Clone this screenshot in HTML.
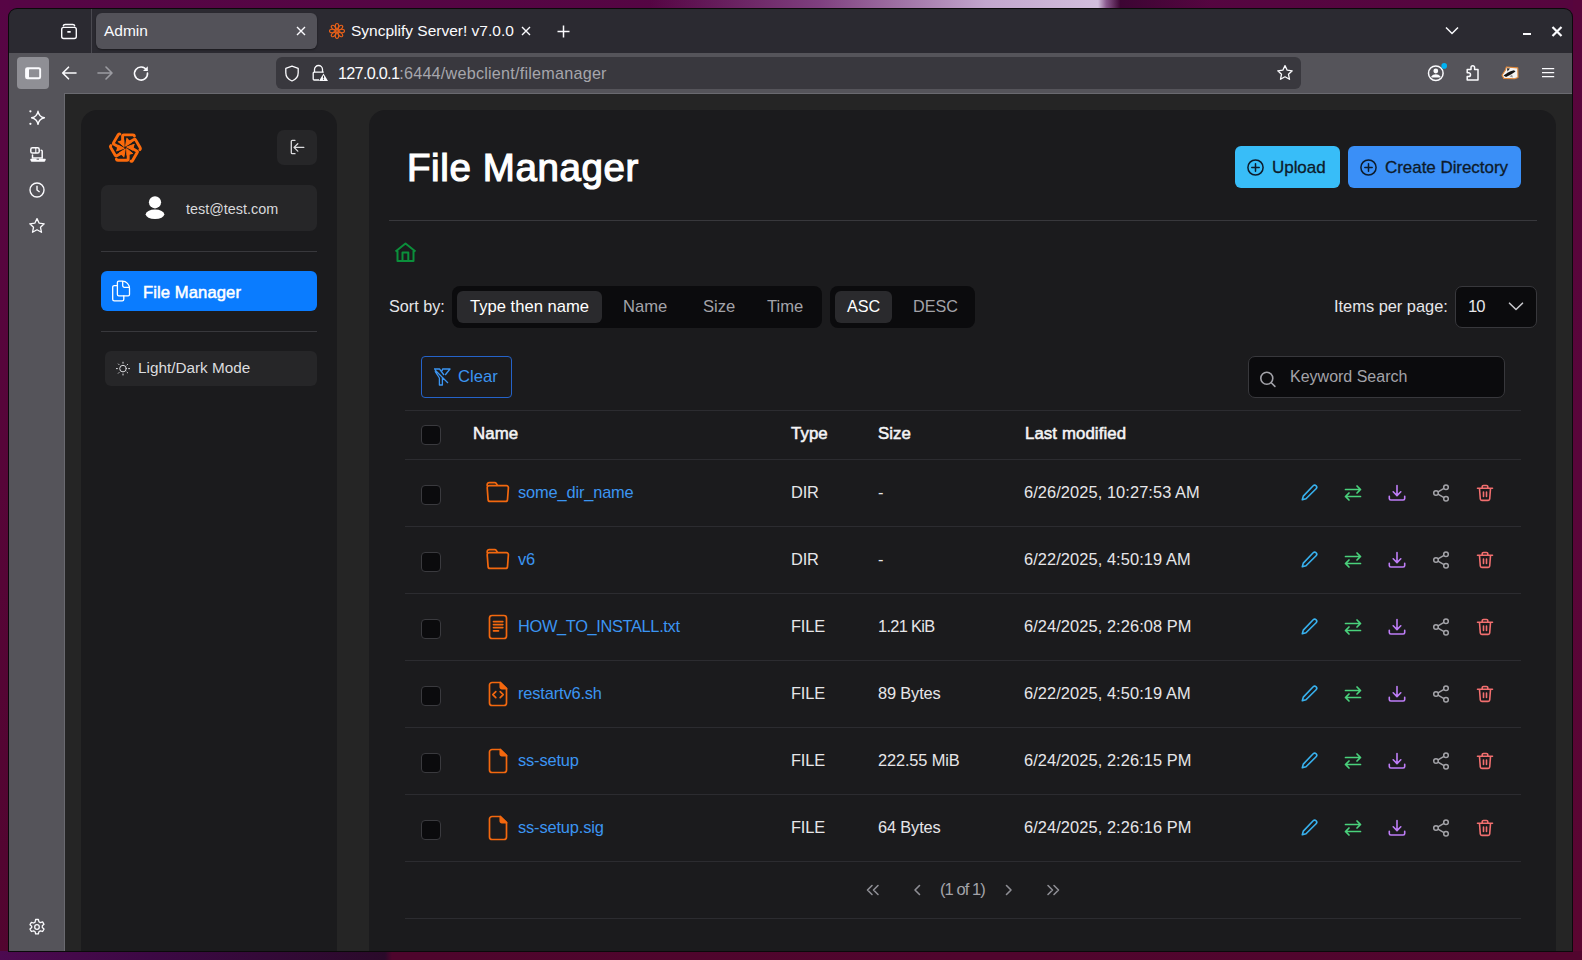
<!DOCTYPE html>
<html><head><meta charset="utf-8">
<style>
*{box-sizing:border-box;margin:0;padding:0}
html,body{width:1582px;height:960px;overflow:hidden}
body{font-family:"Liberation Sans",sans-serif;background:#560842;position:relative}
.a{position:absolute}
.t{white-space:nowrap;line-height:1}
svg{display:block;overflow:visible}
.card{background:#1b1b1d;border-radius:16px 16px 0 0}
.cb{width:20px;height:20px;background:#0b0b0d;border:1px solid #3a3a3e;border-radius:4px}
.rt{font-size:16.4px;color:#e6e6e9;letter-spacing:-0.15px}
</style></head><body>
<div class="a" style="left:0;top:0;width:1582px;height:960px;background:linear-gradient(90deg,#560545 0%,#550543 50%,#56053e 100%)"></div>
<div class="a" style="left:1573px;top:0;width:9px;height:960px;background:linear-gradient(180deg,#58053c 0%,#59053a 50%,#5a0530 100%)"></div>
<div class="a" style="left:0;top:0;width:9px;height:960px;background:linear-gradient(180deg,#570545 0%,#570538 50%,#52052f 100%)"></div>
<div class="a" style="left:650px;top:0;width:560px;height:9px;background:linear-gradient(90deg,rgba(150,100,160,0) 0%,rgba(160,110,175,.55) 30%,rgba(200,175,212,.95) 60%,rgba(210,190,220,1) 80%,rgba(150,110,160,.8) 81.5%,rgba(50,5,45,.7) 84%,rgba(86,5,69,0) 100%)"></div>
<div class="a" style="left:0;top:951px;width:1582px;height:9px;background:linear-gradient(90deg,#4c0a50 0px,#3c0844 150px,#2a0a2a 385px,#4e052c 392px,#52052e 1582px)"></div>
<div class="a" style="left:8px;top:8px;width:1565px;height:944px;background:#0a0a0a;border-radius:9px 9px 0 0"></div>
<div class="a" style="left:9px;top:9px;width:1563px;height:44px;background:#2b2a31;border-radius:8px 8px 0 0"></div>
<div class="a" style="left:9px;top:53px;width:1563px;height:40px;background:#55545a"></div>
<div class="a" style="left:9px;top:93px;width:55px;height:858px;background:#55545a"></div>
<div class="a" style="left:64px;top:93px;width:1508px;height:858px;background:#252525;border-left:1px solid #6a6a70;border-top:1px solid #6a6a70"></div>
<div class="a card" style="left:81px;top:110px;width:256px;height:841px"></div>
<div class="a card" style="left:369px;top:110px;width:1187px;height:841px"></div>
<!-- titlebar icons -->
<svg class="a" style="left:59px;top:22px" width="20" height="18" viewBox="0 0 20 18" fill="none" stroke="#fbfbfe" stroke-width="1.4" stroke-linecap="round"><path d="M4.3 3.9Q4.5 2.5 6.2 2.5H13.8Q15.5 2.5 15.7 3.9"/><rect x="2.7" y="5.4" width="14.6" height="11.1" rx="2"/><path d="M8.9 9.9h2.2" stroke-width="1.6"/></svg>
<div class="a" style="left:91px;top:9px;width:1px;height:44px;background:#4a4950"></div>
<div class="a" style="left:96px;top:13px;width:221px;height:36px;background:#535259;border-radius:6px;box-shadow:0 1px 2px rgba(0,0,0,.4)"></div>
<div class="a t" style="left:104px;top:23px;font-size:15.5px;color:#fbfbfe">Admin</div>
<svg class="a" style="left:295px;top:25px" width="12" height="12" viewBox="0 0 12 12" stroke="#fbfbfe" stroke-width="1.4"><path d="M2 2l8 8M10 2l-8 8"/></svg>
<svg class="a" style="left:329px;top:23px" width="16" height="16" viewBox="0 0 16 16" fill="none" stroke="#e8611a" stroke-width="1.1"><g transform="translate(8 8)"><ellipse cx="0" cy="-4.6" rx="1.75" ry="2.9" transform="rotate(0)"/><ellipse cx="0" cy="-4.6" rx="1.75" ry="2.9" transform="rotate(45)"/><ellipse cx="0" cy="-4.6" rx="1.75" ry="2.9" transform="rotate(90)"/><ellipse cx="0" cy="-4.6" rx="1.75" ry="2.9" transform="rotate(135)"/><ellipse cx="0" cy="-4.6" rx="1.75" ry="2.9" transform="rotate(180)"/><ellipse cx="0" cy="-4.6" rx="1.75" ry="2.9" transform="rotate(225)"/><ellipse cx="0" cy="-4.6" rx="1.75" ry="2.9" transform="rotate(270)"/><ellipse cx="0" cy="-4.6" rx="1.75" ry="2.9" transform="rotate(315)"/><circle r="1.2"/></g></svg>
<div class="a t" style="left:351px;top:23px;font-size:15.5px;color:#fbfbfe">Syncplify Server! v7.0.0</div>
<svg class="a" style="left:520px;top:25px" width="12" height="12" viewBox="0 0 12 12" stroke="#fbfbfe" stroke-width="1.4"><path d="M2 2l8 8M10 2l-8 8"/></svg>
<svg class="a" style="left:556px;top:24px" width="15" height="15" viewBox="0 0 15 15" stroke="#fbfbfe" stroke-width="1.5"><path d="M7.5 1.5v12M1.5 7.5h12"/></svg>
<svg class="a" style="left:1444px;top:25px" width="16" height="11" viewBox="0 0 16 11" fill="none" stroke="#fbfbfe" stroke-width="1.5"><path d="M2 2.5l6 6 6-6"/></svg>
<div class="a" style="left:1523px;top:33px;width:8px;height:2.4px;background:#fbfbfe"></div>
<svg class="a" style="left:1551px;top:26px" width="12" height="11" viewBox="0 0 12 11" stroke="#fbfbfe" stroke-width="2.2"><path d="M1.5 1l9 9M10.5 1l-9 9"/></svg>

<!-- toolbar -->
<div class="a" style="left:17px;top:57px;width:32px;height:32px;background:#8f8f95;border-radius:4px"></div>
<svg class="a" style="left:23px;top:65px" width="20" height="16" viewBox="0 0 20 16"><rect x="2.1" y="2.3" width="16" height="11.9" rx="2.3" fill="#fbfbfe"/><rect x="6" y="4.3" width="10.2" height="7.9" rx="0.4" fill="#8f8f95"/></svg>
<svg class="a" style="left:60px;top:64px" width="18" height="18" viewBox="0 0 18 18" fill="none" stroke="#fbfbfe" stroke-width="1.6" stroke-linecap="round" stroke-linejoin="round"><path d="M16 9H3M8.5 3.2L2.7 9l5.8 5.8"/></svg>
<svg class="a" style="left:96px;top:64px" width="18" height="18" viewBox="0 0 18 18" fill="none" stroke="#9c9ca2" stroke-width="1.6" stroke-linecap="round" stroke-linejoin="round"><path d="M2 9h13.5M10 3l6 6-6 6"/></svg>
<svg class="a" style="left:132px;top:64px" width="18" height="18" viewBox="0 0 18 18" fill="none" stroke="#fbfbfe" stroke-width="1.6" stroke-linecap="round"><path d="M14.6 6.2A6.5 6.5 0 1 0 15.5 9"/><path d="M15.8 2.2v4.8h-4.8z" fill="#fbfbfe" stroke="none"/></svg>
<div class="a" style="left:276px;top:57px;width:1025px;height:32px;background:#39383e;border-radius:6px"></div>
<svg class="a" style="left:284px;top:65px" width="16" height="17" viewBox="0 0 16 17" fill="none" stroke="#fbfbfe" stroke-width="1.3" stroke-linejoin="round"><path d="M8 1.2L1.8 3.4v4.4c0 4 2.7 6.9 6.2 8.2 3.5-1.3 6.2-4.2 6.2-8.2V3.4z"/></svg>
<svg class="a" style="left:311px;top:64px" width="18" height="18" viewBox="0 0 18 18" fill="none" stroke="#fbfbfe" stroke-width="1.3"><path d="M3.5 8.2V5.5a4 4 0 0 1 8 0v2.7"/><path d="M8 16H3.2a1 1 0 0 1-1-1V9.2a1 1 0 0 1 1-1h9.5"/><path d="M12.5 9.5l4.5 7.5h-9z" fill="#fbfbfe" stroke="none"/><path d="M12.5 11.8v2.6M12.5 15.3v.8" stroke="#39383e" stroke-width="1.1"/></svg>
<div class="a t" style="left:338px;top:65px;font-size:16.2px;color:#fbfbfe"><span style="letter-spacing:-0.7px">127.0.0.1</span><span style="color:#a6a6ac;letter-spacing:0.22px">:6444/webclient/filemanager</span></div>
<svg class="a" style="left:1276px;top:64px" width="18" height="18" viewBox="0 0 18 18" fill="none" stroke="#fbfbfe" stroke-width="1.3" stroke-linejoin="round"><path d="M9 1.6l2.2 4.6 5 .6-3.7 3.5 1 5-4.5-2.5-4.5 2.5 1-5L1.8 6.8l5-.6z"/></svg>
<svg class="a" style="left:1426px;top:63px" width="22" height="20" viewBox="0 0 22 20" fill="none"><circle cx="9.8" cy="10.2" r="7.3" stroke="#fbfbfe" stroke-width="1.5"/><circle cx="9.8" cy="8" r="2.4" fill="#fbfbfe"/><path d="M5.5 13.2c.8-1.3 2.3-2 4.3-2s3.5.7 4.3 2v1.3H5.5z" fill="#fbfbfe"/><circle cx="18.2" cy="2.9" r="2.8" fill="#00b3f4"/></svg>
<svg class="a" style="left:1464px;top:65px" width="18" height="18" viewBox="0 0 18 18" fill="none" stroke="#fbfbfe" stroke-width="1.5" stroke-linejoin="round"><path d="M7 2.5a1.8 1.8 0 0 1 3.6 0V4.5h3.4v10.5H3.2v-3.4h1.4a1.9 1.9 0 0 0 0-3.8H3.2V4.5H7z"/></svg>
<svg class="a" style="left:1500px;top:64px" width="20" height="17" viewBox="0 0 20 17"><path d="M6.4 3L17.8 3.9 18 13.6 14.5 14.7 3.9 14.4 2 11.2 5.3 6.3z" fill="#f4f4f4" stroke="#e0883a" stroke-width="1.1" stroke-linejoin="round"/><path d="M3.5 11.5L8 8.5 10.5 7.2 14 6.2 15.5 7.5 12.5 9.5 10 11 6 13z" fill="#151515"/><path d="M7 4.2l3 .2-2.5 3z" fill="#222"/><path d="M9.5 12.5l2.5-2 1 3z" fill="#9a9a9a"/></svg>
<svg class="a" style="left:1540px;top:64px" width="16" height="16" viewBox="0 0 16 16" stroke="#fbfbfe" stroke-width="1.4"><path d="M2 4.6h12.2M2 8.6h12.2M2 12.6h12.2"/></svg>

<!-- firefox sidebar icons -->
<svg class="a" style="left:28px;top:108px" width="20" height="20" viewBox="0 0 20 20" fill="none" stroke="#fbfbfe" stroke-width="1.4" stroke-linejoin="round"><path d="M10 3.3C10.7 7.3 12.3 8.9 16.4 9.8 12.3 10.7 10.7 12.3 10 16.3 9.3 12.3 7.7 10.7 3.6 9.8 7.7 8.9 9.3 7.3 10 3.3z"/><circle cx="2.4" cy="3.3" r="1.1" fill="#fbfbfe" stroke="none"/><circle cx="2.4" cy="15.8" r="1.1" fill="#fbfbfe" stroke="none"/></svg>
<svg class="a" style="left:24px;top:140px" width="28" height="28" viewBox="0 0 28 28" fill="none" stroke="#fbfbfe" stroke-width="1.5"><rect x="6.8" y="7.8" width="8.4" height="5.2" rx="1.6"/><path d="M11.8 8v5" stroke-width="1.1"/><path d="M17.2 10.2a1 1 0 0 1 1 1v6.8H8.5V15" stroke-linecap="round"/><path d="M7 18.7h14a.8.8 0 0 1 .7 1.1l-.4 1a1.2 1.2 0 0 1-1.1.9H7.8a1.2 1.2 0 0 1-1.1-.9l-.4-1a.8.8 0 0 1 .7-1.1z" fill="#fbfbfe" stroke="none"/><path d="M12.6 19.2h2.4" stroke="#55545a" stroke-width="1"/></svg>
<svg class="a" style="left:28px;top:181px" width="18" height="18" viewBox="0 0 18 18" fill="none" stroke="#fbfbfe" stroke-width="1.4"><circle cx="9" cy="9" r="7"/><path d="M9 4.8V9l2.6 2"/></svg>
<svg class="a" style="left:28px;top:217px" width="18" height="18" viewBox="0 0 18 18" fill="none" stroke="#fbfbfe" stroke-width="1.3" stroke-linejoin="round"><path d="M9 1.6l2.2 4.6 5 .6-3.7 3.5 1 5-4.5-2.5-4.5 2.5 1-5L1.8 6.8l5-.6z"/></svg>
<svg class="a" style="left:28px;top:918px" width="18" height="18" viewBox="0 0 18 18" fill="none" stroke="#fbfbfe" stroke-width="1.3"><path d="M7.6 1.5h2.8l.5 2.2 1.5.9 2.2-.7 1.4 2.4-1.7 1.5v1.8l1.7 1.5-1.4 2.4-2.2-.7-1.5.9-.5 2.2H7.6l-.5-2.2-1.5-.9-2.2.7-1.4-2.4 1.7-1.5V8.2L2 6.7l1.4-2.4 2.2.7 1.5-.9z" stroke-linejoin="round"/><circle cx="9" cy="9" r="2.3"/></svg>

<!-- app sidebar -->
<svg class="a" style="left:107px;top:130px" width="36" height="36" viewBox="-18.4 -17.6 36 36"><g fill="#fb6a0c" stroke="#fb6a0c" stroke-linejoin="round">
<g><path d="M9 -11.6 Q8.8 -12.7 7.6 -12.7 L-1.6 -12.7 Q-2.8 -12.7 -2.8 -11.5 L-2.8 -4.5" fill="none" stroke-width="2.9" stroke-linecap="round"/><path d="M-7.6 -6.2 L-1.2 -0.9 L-1.6 -8" stroke-width="1"/></g><g transform="rotate(60)"><path d="M9 -11.6 Q8.8 -12.7 7.6 -12.7 L-1.6 -12.7 Q-2.8 -12.7 -2.8 -11.5 L-2.8 -4.5" fill="none" stroke-width="2.9" stroke-linecap="round"/><path d="M-7.6 -6.2 L-1.2 -0.9 L-1.6 -8" stroke-width="1"/></g><g transform="rotate(120)"><path d="M9 -11.6 Q8.8 -12.7 7.6 -12.7 L-1.6 -12.7 Q-2.8 -12.7 -2.8 -11.5 L-2.8 -4.5" fill="none" stroke-width="2.9" stroke-linecap="round"/><path d="M-7.6 -6.2 L-1.2 -0.9 L-1.6 -8" stroke-width="1"/></g><g transform="rotate(180)"><path d="M9 -11.6 Q8.8 -12.7 7.6 -12.7 L-1.6 -12.7 Q-2.8 -12.7 -2.8 -11.5 L-2.8 -4.5" fill="none" stroke-width="2.9" stroke-linecap="round"/><path d="M-7.6 -6.2 L-1.2 -0.9 L-1.6 -8" stroke-width="1"/></g><g transform="rotate(240)"><path d="M9 -11.6 Q8.8 -12.7 7.6 -12.7 L-1.6 -12.7 Q-2.8 -12.7 -2.8 -11.5 L-2.8 -4.5" fill="none" stroke-width="2.9" stroke-linecap="round"/><path d="M-7.6 -6.2 L-1.2 -0.9 L-1.6 -8" stroke-width="1"/></g><g transform="rotate(300)"><path d="M9 -11.6 Q8.8 -12.7 7.6 -12.7 L-1.6 -12.7 Q-2.8 -12.7 -2.8 -11.5 L-2.8 -4.5" fill="none" stroke-width="2.9" stroke-linecap="round"/><path d="M-7.6 -6.2 L-1.2 -0.9 L-1.6 -8" stroke-width="1"/></g></g></svg>
<div class="a" style="left:277px;top:130px;width:40px;height:35px;background:#262628;border-radius:7px"></div>
<svg class="a" style="left:288px;top:138px" width="18" height="18" viewBox="0 0 18 18" fill="none" stroke="#dcdcdf" stroke-width="1.3" stroke-linecap="round" stroke-linejoin="round"><path d="M7 2.3H4.3a1 1 0 0 0-1 1v11.4a1 1 0 0 0 1 1H7"/><path d="M15.8 9.4H6.3M9.8 5.7L6 9.4l3.8 3.7"/></svg>
<div class="a" style="left:101px;top:185px;width:216px;height:46px;background:#262628;border-radius:7px"></div>
<svg class="a" style="left:145px;top:196px" width="20" height="24" viewBox="0 0 20 24" fill="#fff"><circle cx="10" cy="6.3" r="6.1"/><ellipse cx="10" cy="18.3" rx="9.3" ry="4.8"/></svg>
<div class="a t" style="left:186px;top:202px;font-size:14.4px;color:#d9d9dc">test@test.com</div>
<div class="a" style="left:101px;top:251px;width:216px;height:1px;background:#38383c"></div>
<div class="a" style="left:101px;top:271px;width:216px;height:40px;background:#0a7cff;border-radius:6px"></div>
<svg class="a" style="left:105px;top:275px" width="32" height="32" viewBox="0 0 32 32" fill="none" stroke="#fff" stroke-width="1.3" stroke-linejoin="round" stroke-linecap="round"><path d="M12.4 10.6H9.3a1.6 1.6 0 0 0-1.6 1.6v12a1.6 1.6 0 0 0 1.6 1.6h7.9a1.6 1.6 0 0 0 1.6-1.6v-3.4"/><path d="M12.4 7.6a1.4 1.4 0 0 1 1.4-1.4h3.4c4.3 0 7.3 3.3 7.3 7.4v5.9a1.3 1.3 0 0 1-1.3 1.3h-9.4a1.4 1.4 0 0 1-1.4-1.4z"/><path d="M17.7 6.5v4.2a1.6 1.6 0 0 0 1.6 1.6h4.5"/></svg>
<div class="a t" style="left:143px;top:284.5px;font-size:16.6px;font-weight:400;letter-spacing:0.1px;-webkit-text-stroke:0.5px #fff;color:#fff">File Manager</div>
<div class="a" style="left:101px;top:331px;width:216px;height:1px;background:#38383c"></div>
<div class="a" style="left:105px;top:351px;width:212px;height:35px;background:#262628;border-radius:6px"></div>
<svg class="a" style="left:115px;top:361px" width="16" height="16" viewBox="0 0 16 16" fill="none" stroke="#dcdcdf" stroke-width="1" stroke-linecap="round"><circle cx="8" cy="7.6" r="3.3"/><path d="M8 1.2v1M8 13v1M1.4 7.6h1M13.6 7.6h1M3.4 3l.6.6M12 11.2l.6.6M3.4 12.2l.6-.6M12 4l.6-.6"/></svg>
<div class="a t" style="left:138px;top:360px;font-size:15.3px;color:#dcdcdf">Light/Dark Mode</div>

<!-- main header -->
<div class="a t" style="left:407px;top:149.3px;font-size:38.5px;font-weight:400;color:#fff;letter-spacing:0.6px;-webkit-text-stroke:1.2px #fff">File Manager</div>
<div class="a" style="left:1235px;top:146px;width:105px;height:42px;background:#38bdf8;border-radius:6px"></div>
<svg class="a" style="left:1246px;top:158px" width="19" height="19" viewBox="0 0 19 19" fill="none" stroke="#0d1b2b" stroke-width="1.5" stroke-linecap="round"><circle cx="9.5" cy="9.5" r="7.6"/><path d="M9.5 5.8v7.4M5.8 9.5h7.4"/></svg>
<div class="a t" style="left:1272px;top:159px;font-size:17px;color:#0d1b2b;letter-spacing:-0.05px;-webkit-text-stroke:0.3px #0d1b2b">Upload</div>
<div class="a" style="left:1348px;top:146px;width:173px;height:42px;background:#3a8ff7;border-radius:6px"></div>
<svg class="a" style="left:1359px;top:158px" width="19" height="19" viewBox="0 0 19 19" fill="none" stroke="#0d1b2b" stroke-width="1.5" stroke-linecap="round"><circle cx="9.5" cy="9.5" r="7.6"/><path d="M9.5 5.8v7.4M5.8 9.5h7.4"/></svg>
<div class="a t" style="left:1385px;top:159px;font-size:17px;color:#0d1b2b;letter-spacing:-0.05px;-webkit-text-stroke:0.3px #0d1b2b">Create Directory</div>
<div class="a" style="left:389px;top:220px;width:1148px;height:1px;background:#38383c"></div>
<svg class="a" style="left:393px;top:241px" width="24" height="22" viewBox="0 0 24 22" fill="none" stroke="#0b8f3b" stroke-width="2" stroke-linejoin="round"><path d="M2.5 10.5L12.5 2.5l10 8M4.5 9v11h16V9M9.5 20v-8.5h5.8V20"/></svg>

<div class="a t" style="left:389px;top:298px;font-size:16.2px;color:#e6e6e9">Sort by:</div>
<div class="a" style="left:452px;top:286px;width:370px;height:42px;background:#0b0b0d;border-radius:8px"></div>
<div class="a" style="left:457px;top:291px;width:145px;height:32px;background:#2a2a2d;border-radius:6px"></div>
<div class="a t" style="left:470px;top:298.5px;font-size:16.6px;color:#fff">Type then name</div>
<div class="a t" style="left:623px;top:298.5px;font-size:16.6px;color:#a3a3a9">Name</div>
<div class="a t" style="left:703px;top:298.5px;font-size:16.6px;color:#a3a3a9">Size</div>
<div class="a t" style="left:767px;top:298.5px;font-size:16.6px;color:#a3a3a9">Time</div>
<div class="a" style="left:830px;top:286px;width:145px;height:42px;background:#0b0b0d;border-radius:8px"></div>
<div class="a" style="left:835px;top:291px;width:57px;height:32px;background:#2a2a2d;border-radius:6px"></div>
<div class="a t" style="left:847px;top:298px;font-size:16.2px;color:#fff">ASC</div>
<div class="a t" style="left:913px;top:298px;font-size:16.2px;color:#a3a3a9">DESC</div>
<div class="a t" style="left:1334px;top:298px;font-size:16.4px;color:#e6e6e9">Items per page:</div>
<div class="a" style="left:1455px;top:286px;width:82px;height:42px;background:#0b0b0d;border:1px solid #38383c;border-radius:7px"></div>
<div class="a t" style="left:1468px;top:299px;font-size:16.6px;color:#e6e6e9;letter-spacing:-1px">10</div>
<svg class="a" style="left:1507px;top:299px" width="18" height="14" viewBox="0 0 18 14" fill="none" stroke="#c8c8cc" stroke-width="1.6" stroke-linecap="round" stroke-linejoin="round"><path d="M2.5 4.2l6.5 6.3 6.5-6.3"/></svg>

<div class="a" style="left:421px;top:356px;width:91px;height:42px;border:1px solid #2563c9;border-radius:4px"></div>
<svg class="a" style="left:432px;top:367px" width="20" height="20" viewBox="0 0 20 20" fill="none" stroke="#3b95f2" stroke-width="1.3" stroke-linejoin="round"><path d="M2 2h5.5L12 8M10 4l.6-2H18l-4.8 6M3 3l13 13M10.4 10.2v7.8h-3V11L3 4.2"/></svg>
<div class="a t" style="left:458px;top:369px;font-size:16.6px;color:#3b95f2">Clear</div>
<div class="a" style="left:1248px;top:356px;width:257px;height:42px;background:#0b0b0d;border:1px solid #38383c;border-radius:7px"></div>
<svg class="a" style="left:1258px;top:369px" width="20" height="20" viewBox="0 0 20 20" fill="none" stroke="#a3a3a9" stroke-width="1.6" stroke-linecap="round"><circle cx="8.8" cy="9.3" r="6"/><path d="M13.3 13.8l3.6 3.6"/></svg>
<div class="a t" style="left:1290px;top:368.5px;font-size:16px;color:#a3a3a9">Keyword Search</div>

<!-- table -->
<div class="a" style="left:405px;top:410px;width:1116px;height:1px;background:#2c2c30"></div>
<div class="a cb" style="left:421px;top:425px"></div>
<div class="a t" style="left:473px;top:426.1px;font-size:16.8px;font-weight:400;letter-spacing:0.1px;-webkit-text-stroke:0.55px #f4f4f5;color:#f4f4f5">Name</div>
<div class="a t" style="left:791px;top:426.1px;font-size:16.8px;font-weight:400;letter-spacing:0.1px;-webkit-text-stroke:0.55px #f4f4f5;color:#f4f4f5">Type</div>
<div class="a t" style="left:878px;top:426.1px;font-size:16.8px;font-weight:400;letter-spacing:0.1px;-webkit-text-stroke:0.55px #f4f4f5;color:#f4f4f5">Size</div>
<div class="a t" style="left:1025px;top:426.1px;font-size:16.8px;font-weight:400;letter-spacing:0.1px;-webkit-text-stroke:0.55px #f4f4f5;color:#f4f4f5">Last modified</div>
<div class="a" style="left:405px;top:459px;width:1116px;height:1px;background:#2c2c30"></div>

<div class="a" style="left:405px;top:526px;width:1116px;height:1px;background:#2c2c30"></div>
<div class="a cb" style="left:421px;top:485px"></div>
<svg class="a" style="left:485px;top:481px" width="26" height="22" viewBox="0 0 26 22" fill="none" stroke="#f3680f" stroke-width="1.7" stroke-linejoin="round"><path d="M2.2 5.2V3.6a2 2 0 0 1 2-2h5.6a1.6 1.6 0 0 1 1.3.7l1.4 2.1"/><path d="M4.2 4.6h17.2a2 2 0 0 1 2 2.1l-.9 11.9a1.9 1.9 0 0 1-1.9 1.8H5a1.9 1.9 0 0 1-1.9-1.8L2.2 6.7a2 2 0 0 1 2-2.1z"/></svg>
<div class="a t rt" style="left:518px;top:484px;color:#3b95f2;">some_dir_name</div>
<div class="a t rt" style="left:791px;top:484px">DIR</div>
<div class="a t rt" style="left:878px;top:484px;">-</div>
<div class="a t rt" style="left:1024px;top:484px;letter-spacing:0.08px">6/26/2025, 10:27:53 AM</div>
<svg class="a" style="left:1299px;top:483px" width="20" height="20" viewBox="0 0 20 20" fill="none" stroke="#38b2ef" stroke-width="1.6" stroke-linejoin="round"><path d="M14.2 2.8a2 2 0 0 1 2.9 2.9L7 15.8l-3.7 1 1-3.7z"/></svg>
<svg class="a" style="left:1343px;top:483px" width="20" height="20" viewBox="0 0 20 20" fill="none" stroke="#4ad27c" stroke-width="1.7" stroke-linecap="round" stroke-linejoin="round"><path d="M2.5 6.5h15M14 3l3.5 3.5L14 10M17.5 13.5h-15M6 10l-3.5 3.5L6 17"/></svg>
<svg class="a" style="left:1387px;top:483px" width="20" height="20" viewBox="0 0 20 20" fill="none" stroke="#bf7ef8" stroke-width="1.6" stroke-linecap="round" stroke-linejoin="round"><path d="M10 2.5v10M6.2 8.8L10 12.6l3.8-3.8M2.3 13.2v2.3a1.5 1.5 0 0 0 1.5 1.5h12.4a1.5 1.5 0 0 0 1.5-1.5v-2.3"/></svg>
<svg class="a" style="left:1431px;top:483px" width="20" height="20" viewBox="0 0 20 20" fill="none" stroke="#a3a3a8" stroke-width="1.5"><circle cx="5" cy="10" r="2.3"/><circle cx="15" cy="4.3" r="2.3"/><circle cx="15" cy="15.7" r="2.3"/><path d="M7 8.9l6-3.5M7 11.1l6 3.5"/></svg>
<svg class="a" style="left:1475px;top:483px" width="20" height="20" viewBox="0 0 20 20" fill="none" stroke="#f26f6f" stroke-width="1.6" stroke-linecap="round" stroke-linejoin="round"><path d="M2.5 5.2h15M7.2 5V3.8a1.3 1.3 0 0 1 1.3-1.3h3a1.3 1.3 0 0 1 1.3 1.3V5M4.5 5.5l.8 10.5a1.5 1.5 0 0 0 1.5 1.4h6.4a1.5 1.5 0 0 0 1.5-1.4l.8-10.5M8.5 9v4.5M11.5 9v4.5"/></svg>
<div class="a" style="left:405px;top:593px;width:1116px;height:1px;background:#2c2c30"></div>
<div class="a cb" style="left:421px;top:552px"></div>
<svg class="a" style="left:485px;top:548px" width="26" height="22" viewBox="0 0 26 22" fill="none" stroke="#f3680f" stroke-width="1.7" stroke-linejoin="round"><path d="M2.2 5.2V3.6a2 2 0 0 1 2-2h5.6a1.6 1.6 0 0 1 1.3.7l1.4 2.1"/><path d="M4.2 4.6h17.2a2 2 0 0 1 2 2.1l-.9 11.9a1.9 1.9 0 0 1-1.9 1.8H5a1.9 1.9 0 0 1-1.9-1.8L2.2 6.7a2 2 0 0 1 2-2.1z"/></svg>
<div class="a t rt" style="left:518px;top:551px;color:#3b95f2;">v6</div>
<div class="a t rt" style="left:791px;top:551px">DIR</div>
<div class="a t rt" style="left:878px;top:551px;">-</div>
<div class="a t rt" style="left:1024px;top:551px;letter-spacing:0.08px">6/22/2025, 4:50:19 AM</div>
<svg class="a" style="left:1299px;top:550px" width="20" height="20" viewBox="0 0 20 20" fill="none" stroke="#38b2ef" stroke-width="1.6" stroke-linejoin="round"><path d="M14.2 2.8a2 2 0 0 1 2.9 2.9L7 15.8l-3.7 1 1-3.7z"/></svg>
<svg class="a" style="left:1343px;top:550px" width="20" height="20" viewBox="0 0 20 20" fill="none" stroke="#4ad27c" stroke-width="1.7" stroke-linecap="round" stroke-linejoin="round"><path d="M2.5 6.5h15M14 3l3.5 3.5L14 10M17.5 13.5h-15M6 10l-3.5 3.5L6 17"/></svg>
<svg class="a" style="left:1387px;top:550px" width="20" height="20" viewBox="0 0 20 20" fill="none" stroke="#bf7ef8" stroke-width="1.6" stroke-linecap="round" stroke-linejoin="round"><path d="M10 2.5v10M6.2 8.8L10 12.6l3.8-3.8M2.3 13.2v2.3a1.5 1.5 0 0 0 1.5 1.5h12.4a1.5 1.5 0 0 0 1.5-1.5v-2.3"/></svg>
<svg class="a" style="left:1431px;top:550px" width="20" height="20" viewBox="0 0 20 20" fill="none" stroke="#a3a3a8" stroke-width="1.5"><circle cx="5" cy="10" r="2.3"/><circle cx="15" cy="4.3" r="2.3"/><circle cx="15" cy="15.7" r="2.3"/><path d="M7 8.9l6-3.5M7 11.1l6 3.5"/></svg>
<svg class="a" style="left:1475px;top:550px" width="20" height="20" viewBox="0 0 20 20" fill="none" stroke="#f26f6f" stroke-width="1.6" stroke-linecap="round" stroke-linejoin="round"><path d="M2.5 5.2h15M7.2 5V3.8a1.3 1.3 0 0 1 1.3-1.3h3a1.3 1.3 0 0 1 1.3 1.3V5M4.5 5.5l.8 10.5a1.5 1.5 0 0 0 1.5 1.4h6.4a1.5 1.5 0 0 0 1.5-1.4l.8-10.5M8.5 9v4.5M11.5 9v4.5"/></svg>
<div class="a" style="left:405px;top:660px;width:1116px;height:1px;background:#2c2c30"></div>
<div class="a cb" style="left:421px;top:619px"></div>
<svg class="a" style="left:488px;top:614px" width="20" height="26" viewBox="0 0 20 26" fill="none" stroke="#f3680f" stroke-width="1.7" stroke-linecap="round"><rect x="1.5" y="1.5" width="17" height="23" rx="2.6"/><path d="M5.5 7.6h9.3M5.5 10.6h9.3M5.5 13.6h9.3M5.5 16.8h5"/></svg>
<div class="a t rt" style="left:518px;top:618px;color:#3b95f2;letter-spacing:-0.35px;">HOW_TO_INSTALL.txt</div>
<div class="a t rt" style="left:791px;top:618px">FILE</div>
<div class="a t rt" style="left:878px;top:618px;letter-spacing:-0.7px;">1.21 KiB</div>
<div class="a t rt" style="left:1024px;top:618px;letter-spacing:0.08px">6/24/2025, 2:26:08 PM</div>
<svg class="a" style="left:1299px;top:617px" width="20" height="20" viewBox="0 0 20 20" fill="none" stroke="#38b2ef" stroke-width="1.6" stroke-linejoin="round"><path d="M14.2 2.8a2 2 0 0 1 2.9 2.9L7 15.8l-3.7 1 1-3.7z"/></svg>
<svg class="a" style="left:1343px;top:617px" width="20" height="20" viewBox="0 0 20 20" fill="none" stroke="#4ad27c" stroke-width="1.7" stroke-linecap="round" stroke-linejoin="round"><path d="M2.5 6.5h15M14 3l3.5 3.5L14 10M17.5 13.5h-15M6 10l-3.5 3.5L6 17"/></svg>
<svg class="a" style="left:1387px;top:617px" width="20" height="20" viewBox="0 0 20 20" fill="none" stroke="#bf7ef8" stroke-width="1.6" stroke-linecap="round" stroke-linejoin="round"><path d="M10 2.5v10M6.2 8.8L10 12.6l3.8-3.8M2.3 13.2v2.3a1.5 1.5 0 0 0 1.5 1.5h12.4a1.5 1.5 0 0 0 1.5-1.5v-2.3"/></svg>
<svg class="a" style="left:1431px;top:617px" width="20" height="20" viewBox="0 0 20 20" fill="none" stroke="#a3a3a8" stroke-width="1.5"><circle cx="5" cy="10" r="2.3"/><circle cx="15" cy="4.3" r="2.3"/><circle cx="15" cy="15.7" r="2.3"/><path d="M7 8.9l6-3.5M7 11.1l6 3.5"/></svg>
<svg class="a" style="left:1475px;top:617px" width="20" height="20" viewBox="0 0 20 20" fill="none" stroke="#f26f6f" stroke-width="1.6" stroke-linecap="round" stroke-linejoin="round"><path d="M2.5 5.2h15M7.2 5V3.8a1.3 1.3 0 0 1 1.3-1.3h3a1.3 1.3 0 0 1 1.3 1.3V5M4.5 5.5l.8 10.5a1.5 1.5 0 0 0 1.5 1.4h6.4a1.5 1.5 0 0 0 1.5-1.4l.8-10.5M8.5 9v4.5M11.5 9v4.5"/></svg>
<div class="a" style="left:405px;top:727px;width:1116px;height:1px;background:#2c2c30"></div>
<div class="a cb" style="left:421px;top:686px"></div>
<svg class="a" style="left:488px;top:681px" width="20" height="26" viewBox="0 0 20 26" fill="none" stroke="#f3680f" stroke-width="1.7" stroke-linejoin="round"><path d="M12.3 1.5H4.1a2.6 2.6 0 0 0-2.6 2.6v17.8a2.6 2.6 0 0 0 2.6 2.6h11.8a2.6 2.6 0 0 0 2.6-2.6V7.7z"/><path d="M12.3 1.5v4.6a1.6 1.6 0 0 0 1.6 1.6h4.6z" fill="#f3680f"/><path d="M7.8 10.6l-3 3 3 3M12.2 10.6l3 3-3 3" stroke-linecap="round"/></svg>
<div class="a t rt" style="left:518px;top:685px;color:#3b95f2;">restartv6.sh</div>
<div class="a t rt" style="left:791px;top:685px">FILE</div>
<div class="a t rt" style="left:878px;top:685px;">89 Bytes</div>
<div class="a t rt" style="left:1024px;top:685px;letter-spacing:0.08px">6/22/2025, 4:50:19 AM</div>
<svg class="a" style="left:1299px;top:684px" width="20" height="20" viewBox="0 0 20 20" fill="none" stroke="#38b2ef" stroke-width="1.6" stroke-linejoin="round"><path d="M14.2 2.8a2 2 0 0 1 2.9 2.9L7 15.8l-3.7 1 1-3.7z"/></svg>
<svg class="a" style="left:1343px;top:684px" width="20" height="20" viewBox="0 0 20 20" fill="none" stroke="#4ad27c" stroke-width="1.7" stroke-linecap="round" stroke-linejoin="round"><path d="M2.5 6.5h15M14 3l3.5 3.5L14 10M17.5 13.5h-15M6 10l-3.5 3.5L6 17"/></svg>
<svg class="a" style="left:1387px;top:684px" width="20" height="20" viewBox="0 0 20 20" fill="none" stroke="#bf7ef8" stroke-width="1.6" stroke-linecap="round" stroke-linejoin="round"><path d="M10 2.5v10M6.2 8.8L10 12.6l3.8-3.8M2.3 13.2v2.3a1.5 1.5 0 0 0 1.5 1.5h12.4a1.5 1.5 0 0 0 1.5-1.5v-2.3"/></svg>
<svg class="a" style="left:1431px;top:684px" width="20" height="20" viewBox="0 0 20 20" fill="none" stroke="#a3a3a8" stroke-width="1.5"><circle cx="5" cy="10" r="2.3"/><circle cx="15" cy="4.3" r="2.3"/><circle cx="15" cy="15.7" r="2.3"/><path d="M7 8.9l6-3.5M7 11.1l6 3.5"/></svg>
<svg class="a" style="left:1475px;top:684px" width="20" height="20" viewBox="0 0 20 20" fill="none" stroke="#f26f6f" stroke-width="1.6" stroke-linecap="round" stroke-linejoin="round"><path d="M2.5 5.2h15M7.2 5V3.8a1.3 1.3 0 0 1 1.3-1.3h3a1.3 1.3 0 0 1 1.3 1.3V5M4.5 5.5l.8 10.5a1.5 1.5 0 0 0 1.5 1.4h6.4a1.5 1.5 0 0 0 1.5-1.4l.8-10.5M8.5 9v4.5M11.5 9v4.5"/></svg>
<div class="a" style="left:405px;top:794px;width:1116px;height:1px;background:#2c2c30"></div>
<div class="a cb" style="left:421px;top:753px"></div>
<svg class="a" style="left:488px;top:748px" width="20" height="26" viewBox="0 0 20 26" fill="none" stroke="#f3680f" stroke-width="1.7" stroke-linejoin="round"><path d="M12.3 1.5H4.1a2.6 2.6 0 0 0-2.6 2.6v17.8a2.6 2.6 0 0 0 2.6 2.6h11.8a2.6 2.6 0 0 0 2.6-2.6V7.7z"/><path d="M12.3 1.5v4.6a1.6 1.6 0 0 0 1.6 1.6h4.6z" fill="#f3680f"/></svg>
<div class="a t rt" style="left:518px;top:752px;color:#3b95f2;">ss-setup</div>
<div class="a t rt" style="left:791px;top:752px">FILE</div>
<div class="a t rt" style="left:878px;top:752px;">222.55 MiB</div>
<div class="a t rt" style="left:1024px;top:752px;letter-spacing:0.08px">6/24/2025, 2:26:15 PM</div>
<svg class="a" style="left:1299px;top:751px" width="20" height="20" viewBox="0 0 20 20" fill="none" stroke="#38b2ef" stroke-width="1.6" stroke-linejoin="round"><path d="M14.2 2.8a2 2 0 0 1 2.9 2.9L7 15.8l-3.7 1 1-3.7z"/></svg>
<svg class="a" style="left:1343px;top:751px" width="20" height="20" viewBox="0 0 20 20" fill="none" stroke="#4ad27c" stroke-width="1.7" stroke-linecap="round" stroke-linejoin="round"><path d="M2.5 6.5h15M14 3l3.5 3.5L14 10M17.5 13.5h-15M6 10l-3.5 3.5L6 17"/></svg>
<svg class="a" style="left:1387px;top:751px" width="20" height="20" viewBox="0 0 20 20" fill="none" stroke="#bf7ef8" stroke-width="1.6" stroke-linecap="round" stroke-linejoin="round"><path d="M10 2.5v10M6.2 8.8L10 12.6l3.8-3.8M2.3 13.2v2.3a1.5 1.5 0 0 0 1.5 1.5h12.4a1.5 1.5 0 0 0 1.5-1.5v-2.3"/></svg>
<svg class="a" style="left:1431px;top:751px" width="20" height="20" viewBox="0 0 20 20" fill="none" stroke="#a3a3a8" stroke-width="1.5"><circle cx="5" cy="10" r="2.3"/><circle cx="15" cy="4.3" r="2.3"/><circle cx="15" cy="15.7" r="2.3"/><path d="M7 8.9l6-3.5M7 11.1l6 3.5"/></svg>
<svg class="a" style="left:1475px;top:751px" width="20" height="20" viewBox="0 0 20 20" fill="none" stroke="#f26f6f" stroke-width="1.6" stroke-linecap="round" stroke-linejoin="round"><path d="M2.5 5.2h15M7.2 5V3.8a1.3 1.3 0 0 1 1.3-1.3h3a1.3 1.3 0 0 1 1.3 1.3V5M4.5 5.5l.8 10.5a1.5 1.5 0 0 0 1.5 1.4h6.4a1.5 1.5 0 0 0 1.5-1.4l.8-10.5M8.5 9v4.5M11.5 9v4.5"/></svg>
<div class="a" style="left:405px;top:861px;width:1116px;height:1px;background:#2c2c30"></div>
<div class="a cb" style="left:421px;top:820px"></div>
<svg class="a" style="left:488px;top:815px" width="20" height="26" viewBox="0 0 20 26" fill="none" stroke="#f3680f" stroke-width="1.7" stroke-linejoin="round"><path d="M12.3 1.5H4.1a2.6 2.6 0 0 0-2.6 2.6v17.8a2.6 2.6 0 0 0 2.6 2.6h11.8a2.6 2.6 0 0 0 2.6-2.6V7.7z"/><path d="M12.3 1.5v4.6a1.6 1.6 0 0 0 1.6 1.6h4.6z" fill="#f3680f"/></svg>
<div class="a t rt" style="left:518px;top:819px;color:#3b95f2;">ss-setup.sig</div>
<div class="a t rt" style="left:791px;top:819px">FILE</div>
<div class="a t rt" style="left:878px;top:819px;">64 Bytes</div>
<div class="a t rt" style="left:1024px;top:819px;letter-spacing:0.08px">6/24/2025, 2:26:16 PM</div>
<svg class="a" style="left:1299px;top:818px" width="20" height="20" viewBox="0 0 20 20" fill="none" stroke="#38b2ef" stroke-width="1.6" stroke-linejoin="round"><path d="M14.2 2.8a2 2 0 0 1 2.9 2.9L7 15.8l-3.7 1 1-3.7z"/></svg>
<svg class="a" style="left:1343px;top:818px" width="20" height="20" viewBox="0 0 20 20" fill="none" stroke="#4ad27c" stroke-width="1.7" stroke-linecap="round" stroke-linejoin="round"><path d="M2.5 6.5h15M14 3l3.5 3.5L14 10M17.5 13.5h-15M6 10l-3.5 3.5L6 17"/></svg>
<svg class="a" style="left:1387px;top:818px" width="20" height="20" viewBox="0 0 20 20" fill="none" stroke="#bf7ef8" stroke-width="1.6" stroke-linecap="round" stroke-linejoin="round"><path d="M10 2.5v10M6.2 8.8L10 12.6l3.8-3.8M2.3 13.2v2.3a1.5 1.5 0 0 0 1.5 1.5h12.4a1.5 1.5 0 0 0 1.5-1.5v-2.3"/></svg>
<svg class="a" style="left:1431px;top:818px" width="20" height="20" viewBox="0 0 20 20" fill="none" stroke="#a3a3a8" stroke-width="1.5"><circle cx="5" cy="10" r="2.3"/><circle cx="15" cy="4.3" r="2.3"/><circle cx="15" cy="15.7" r="2.3"/><path d="M7 8.9l6-3.5M7 11.1l6 3.5"/></svg>
<svg class="a" style="left:1475px;top:818px" width="20" height="20" viewBox="0 0 20 20" fill="none" stroke="#f26f6f" stroke-width="1.6" stroke-linecap="round" stroke-linejoin="round"><path d="M2.5 5.2h15M7.2 5V3.8a1.3 1.3 0 0 1 1.3-1.3h3a1.3 1.3 0 0 1 1.3 1.3V5M4.5 5.5l.8 10.5a1.5 1.5 0 0 0 1.5 1.4h6.4a1.5 1.5 0 0 0 1.5-1.4l.8-10.5M8.5 9v4.5M11.5 9v4.5"/></svg>
<div class="a" style="left:405px;top:918px;width:1116px;height:1px;background:#2c2c30"></div>
<svg class="a" style="left:864px;top:882px" width="18" height="16" viewBox="0 0 18 16" fill="none" stroke="#8e8e94" stroke-width="1.6" stroke-linecap="round" stroke-linejoin="round"><path d="M8 3.5L3.5 8 8 12.5M14 3.5L9.5 8l4.5 4.5"/></svg>
<svg class="a" style="left:909px;top:882px" width="16" height="16" viewBox="0 0 16 16" fill="none" stroke="#8e8e94" stroke-width="1.6" stroke-linecap="round" stroke-linejoin="round"><path d="M10.5 3.5L6 8l4.5 4.5"/></svg>
<div class="a t" style="left:940px;top:881px;font-size:16.5px;color:#a3a3a9;letter-spacing:-0.95px">(1 of 1)</div>
<svg class="a" style="left:1001px;top:882px" width="16" height="16" viewBox="0 0 16 16" fill="none" stroke="#8e8e94" stroke-width="1.6" stroke-linecap="round" stroke-linejoin="round"><path d="M5.5 3.5L10 8l-4.5 4.5"/></svg>
<svg class="a" style="left:1044px;top:882px" width="18" height="16" viewBox="0 0 18 16" fill="none" stroke="#8e8e94" stroke-width="1.6" stroke-linecap="round" stroke-linejoin="round"><path d="M4 3.5L8.5 8 4 12.5M10 3.5L14.5 8 10 12.5"/></svg>

</body></html>
